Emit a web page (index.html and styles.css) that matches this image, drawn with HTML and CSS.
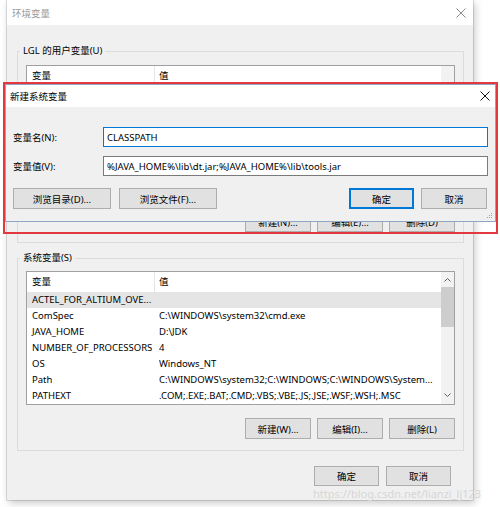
FILE: index.html
```html
<!DOCTYPE html>
<html lang="zh-CN">
<head>
    <meta charset="UTF-8">
    <title>环境变量</title>
    <link rel="stylesheet" href="styles.css">
</head>
<body>
    <div class="window">
        <div class="titlebar">
            <span class="title">环境变量</span>
            <svg class="close-icon" width="10" height="10" viewBox="0 0 10 10">
                <path d="M0.5 0.5 L9.5 9.5 M9.5 0.5 L0.5 9.5" stroke="#8a8a8a" stroke-width="1" fill="none"/>
            </svg>
        </div>
        <div class="window-body">
            <fieldset class="group">
                <legend>LGL 的用户变量(U)</legend>
                <div class="listview">
                    <div class="list-main">
                        <div class="list-head">
                            <span class="col-name">变量</span>
                            <span class="col-value">值</span>
                        </div>
                    </div>
                    <div class="scrollbar"></div>
                </div>
                <div class="group-buttons">
                    <button>新建(N)...</button>
                    <button>编辑(E)...</button>
                    <button>删除(D)</button>
                </div>
            </fieldset>

            <fieldset class="group group-system">
                <legend>系统变量(S)</legend>
                <div class="listview">
                    <div class="list-main">
                        <div class="list-head">
                            <span class="col-name">变量</span>
                            <span class="col-value">值</span>
                        </div>
                        <div class="row selected"><span class="col-name">ACTEL_FOR_ALTIUM_OVE...</span><span class="col-value"></span></div>
                        <div class="row"><span class="col-name">ComSpec</span><span class="col-value">C:\WINDOWS\system32\cmd.exe</span></div>
                        <div class="row"><span class="col-name">JAVA_HOME</span><span class="col-value">D:\JDK</span></div>
                        <div class="row"><span class="col-name">NUMBER_OF_PROCESSORS</span><span class="col-value">4</span></div>
                        <div class="row"><span class="col-name">OS</span><span class="col-value">Windows_NT</span></div>
                        <div class="row"><span class="col-name">Path</span><span class="col-value">C:\WINDOWS\system32;C:\WINDOWS;C:\WINDOWS\System...</span></div>
                        <div class="row"><span class="col-name">PATHEXT</span><span class="col-value">.COM;.EXE;.BAT;.CMD;.VBS;.VBE;.JS;.JSE;.WSF;.WSH;.MSC</span></div>
                    </div>
                    <div class="scrollbar">
                        <svg class="arrow" width="7" height="15" viewBox="0 0 7 15">
                            <path d="M0.5 9.5 L3.5 6.5 L6.5 9.5" stroke="#606060" stroke-width="1" fill="none"/>
                        </svg>
                        <div class="thumb"></div>
                        <svg class="arrow arrow-down" width="7" height="15" viewBox="0 0 7 15">
                            <path d="M0.5 5.5 L3.5 8.5 L6.5 5.5" stroke="#606060" stroke-width="1" fill="none"/>
                        </svg>
                    </div>
                </div>
                <div class="group-buttons">
                    <button>新建(W)...</button>
                    <button>编辑(I)...</button>
                    <button>删除(L)</button>
                </div>
            </fieldset>

            <div class="footer">
                <button>确定</button>
                <button>取消</button>
            </div>
        </div>
    </div>

    <!-- red frame with the new-variable dialog on top -->
    <div class="highlight">
        <div class="dialog">
            <div class="dialog-titlebar">
                <span>新建系统变量</span>
                <svg width="10" height="10" viewBox="0 0 10 10">
                    <path d="M0.5 0.5 L9.5 9.5 M9.5 0.5 L0.5 9.5" stroke="#111" stroke-width="1" fill="none"/>
                </svg>
            </div>
            <div class="dialog-body">
                <div class="field">
                    <label for="varName">变量名(N):</label>
                    <input type="text" id="varName" class="focused" value="CLASSPATH">
                </div>
                <div class="field">
                    <label for="varValue">变量值(V):</label>
                    <input type="text" id="varValue" value="%JAVA_HOME%\lib\dt.jar;%JAVA_HOME%\lib\tools.jar">
                </div>
                <div class="dialog-actions">
                    <button class="wide">浏览目录(D)...</button>
                    <button class="wide">浏览文件(F)...</button>
                    <button class="default push-right">确定</button>
                    <button>取消</button>
                </div>
            </div>
            <svg class="grip" width="6" height="6" viewBox="0 0 6 6">
                <rect x="4" y="0" width="1" height="1" fill="#a0a0a0"/>
                <rect x="2" y="2" width="1" height="1" fill="#a0a0a0"/>
                <rect x="4" y="2" width="1" height="1" fill="#a0a0a0"/>
                <rect x="0" y="4" width="1" height="1" fill="#a0a0a0"/>
                <rect x="2" y="4" width="1" height="1" fill="#a0a0a0"/>
                <rect x="4" y="4" width="1" height="1" fill="#a0a0a0"/>
            </svg>
        </div>
    </div>

    <div class="watermark">https://blog.csdn.net/lianzi_lj123</div>
</body>
</html>
```

FILE: styles.css
```css
/* Windows 10 environment variables dialog */
body {
    margin: 0;
    background: #fff;
    font-family: "Noto Sans", "Noto Sans CJK SC", sans-serif;
    font-size: 9.5px;
    color: #000;
    position: relative;
    height: 507px;
    overflow: hidden;
}

button,
input {
    font-family: inherit;
    font-size: inherit;
    color: #000;
}

button {
    height: 21px;
    width: 66px;
    padding: 0;
    background: #e1e1e1;
    border: 1px solid #adadad;
    box-sizing: border-box;
}

/* outer window */
.window {
    margin-left: 7px;
    width: 466px;
    height: 500px;
    background: #f0f0f0;
    box-shadow: 0 0 0 1px rgba(0, 0, 0, 0.12), 2px 3px 8px rgba(0, 0, 0, 0.22);
}

.titlebar {
    height: 25px;
    background: #fff;
    display: flex;
    align-items: center;
    justify-content: space-between;
    padding: 0 7px 0 5px;
}

.titlebar .title {
    color: #9a9a9a;
}

.window-body {
    padding: 0 9px 0 10px;
}

.group {
    margin: 18px 0 0;
    padding: 0 8px 10px;
    border: 1px solid #dcdcdc;
    min-width: 0;
}

.group legend {
    margin-left: -6px;
    padding: 0 3px;
    line-height: 16px;
}

.group-system {
    margin-top: 7px;
    padding-bottom: 11px;
}

/* list view */
.listview {
    margin-top: 6px;
    height: 134px;
    border: 1px solid #a0a0a0;
    background: #fff;
    box-sizing: border-box;
    display: flex;
    overflow: hidden;
}

.group-system .listview {
    margin-top: 5px;
}

.list-main {
    flex: 1;
    min-width: 0;
}

.list-head {
    display: flex;
    height: 20px;
    line-height: 20px;
}

.list-head .col-name {
    width: 128px;
    padding-left: 5px;
    border-right: 1px solid #e5e5e5;
    box-sizing: border-box;
}

.list-head .col-value {
    padding-left: 4px;
}

.row {
    display: flex;
    height: 16px;
    line-height: 16px;
    white-space: nowrap;
}

.row.selected {
    background: #e5e5e5;
}

.row .col-name {
    width: 132px;
    flex: none;
    padding-left: 5px;
    box-sizing: border-box;
    overflow: hidden;
}

.row .col-value {
    flex: 1;
    overflow: hidden;
}

.scrollbar {
    width: 13px;
    background: #f2f2f2;
    display: flex;
    flex-direction: column;
    align-items: center;
}

.scrollbar .thumb {
    width: 13px;
    height: 40px;
    background: #cdcdcd;
}

.scrollbar .arrow-down {
    margin-top: auto;
    margin-bottom: 1px;
}

.group-buttons {
    display: flex;
    justify-content: flex-end;
    gap: 6px;
    margin-top: 12px;
}

.group-system .group-buttons {
    margin-top: 13px;
}

.footer {
    display: flex;
    justify-content: flex-end;
    gap: 7px;
    margin-top: 15px;
    padding-right: 13px;
}

.footer button {
    width: 65px;
    height: 20px;
}

/* highlighted dialog */
.highlight {
    position: absolute;
    left: 3px;
    top: 82px;
    width: 495px;
    height: 152px;
    border: 2px solid #e3383d;
    box-sizing: border-box;
}

.dialog {
    position: relative;
    background: #f0f0f0;
    border: 1px solid #8fa6c4;
}

.dialog-titlebar {
    height: 22px;
    background: #fff;
    display: flex;
    align-items: center;
    justify-content: space-between;
    padding: 0 5px 0 4px;
}

.dialog-body {
    padding: 20px 7px 12px;
}

.field {
    display: flex;
    align-items: center;
}

.field + .field {
    margin-top: 9px;
}

.field label {
    width: 90px;
    flex: none;
}

.field input {
    flex: 1;
    height: 20px;
    padding: 0 3px;
    border: 1px solid #7a7a7a;
    box-sizing: border-box;
    background: #fff;
    outline: none;
}

.field input.focused {
    border-color: #0078d7;
}

.dialog-actions {
    display: flex;
    gap: 8px;
    margin-top: 12px;
    padding-right: 1px;
}

.dialog-actions button.wide {
    width: 98px;
}

.dialog-actions button.default {
    width: 65px;
    border: 2px solid #0078d7;
}

.dialog-actions .push-right {
    margin-left: auto;
    margin-right: -1px;
}

.grip {
    position: absolute;
    right: 2px;
    bottom: 2px;
}

.watermark {
    position: absolute;
    left: 313px;
    top: 486px;
    font-size: 11px;
    color: #d6d6d6;
}
```
